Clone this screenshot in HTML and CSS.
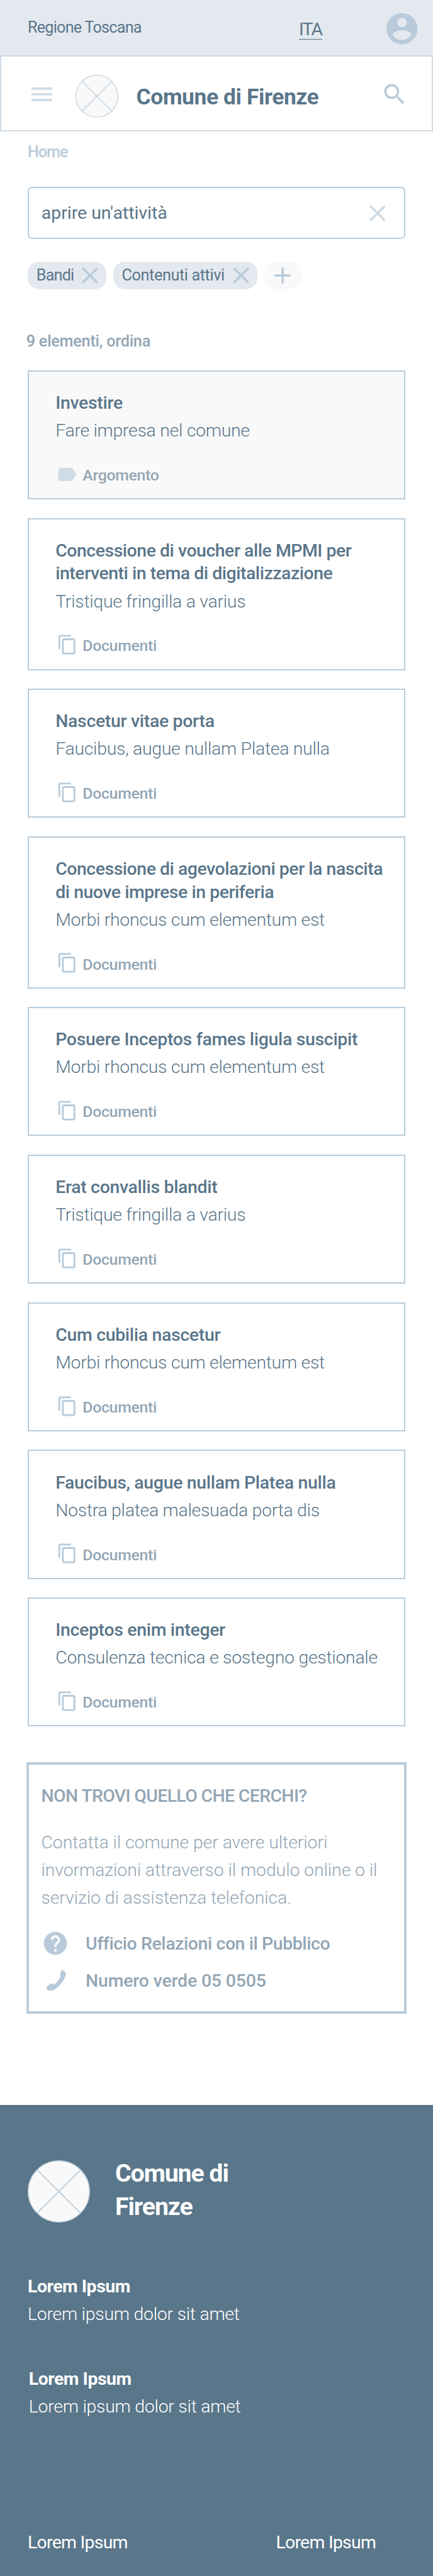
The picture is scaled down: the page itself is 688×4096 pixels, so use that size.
FILE: index.html
```html
<!DOCTYPE html>
<html lang="it">
<head>
<meta charset="utf-8">
<title>Comune di Firenze</title>
<link rel="stylesheet" href="styles.css">
</head>
<body>
<svg class="sprite" width="0" height="0">
  <symbol id="copy" viewBox="0 0 24 24"><path d="M16 1H4c-1.1 0-2 .9-2 2v14h2V3h12V1zm3 4H8c-1.1 0-2 .9-2 2v14c0 1.1.9 2 2 2h11c1.1 0 2-.9 2-2V7c0-1.1-.9-2-2-2zm0 16H8V7h11v14z"/></symbol>
  <symbol id="close" viewBox="0 0 24 24"><path d="M19 6.41L17.59 5 12 10.59 6.41 5 5 6.41 10.59 12 5 17.59 6.41 19 12 13.41 17.59 19 19 17.59 13.41 12z"/></symbol>
  <symbol id="crest" viewBox="0 0 74 74"><circle cx="37" cy="37" r="36.4" fill="#f9f9f9" stroke="#b9cbda" stroke-width="1.2"/><path d="M11.3 11.3l51.4 51.4M62.7 11.3L11.3 62.7" stroke="#b9cbda" stroke-width="1.3"/></symbol>
</svg>

<div class="topbar">
  <span class="region">Regione Toscana</span>
  <a class="lang">ITA</a>
  <svg class="avatar" viewBox="0 0 24 24"><path d="M12 2C6.48 2 2 6.48 2 12s4.48 10 10 10 10-4.48 10-10S17.52 2 12 2zm0 3c1.66 0 3 1.34 3 3s-1.34 3-3 3-3-1.34-3-3 1.34-3 3-3zm0 14.2c-2.5 0-4.71-1.28-6-3.22.03-1.99 4-3.08 6-3.08 1.99 0 5.97 1.09 6 3.08-1.29 1.94-3.5 3.22-6 3.22z"/></svg>
</div>

<header class="header">
  <svg class="menu" viewBox="0 0 36 24"><path d="M0 0h36v4H0zM0 10h36v4H0zM0 20h36v4H0z"/></svg>
  <svg class="crest"><use href="#crest"/></svg>
  <h1 class="site-name">Comune di Firenze</h1>
  <svg class="search-icon" viewBox="0 0 24 24"><path d="M15.5 14h-.79l-.28-.27C15.41 12.59 16 11.11 16 9.5 16 5.91 13.09 3 9.5 3S3 5.91 3 9.5 5.91 16 9.5 16c1.61 0 3.09-.59 4.23-1.57l.27.28v.79l5 4.99L20.49 19l-4.99-5zm-6 0C7.01 14 5 11.99 5 9.5S7.01 5 9.5 5 14 7.01 14 9.5 11.99 14 9.5 14z"/></svg>
</header>

<main class="main">
  <nav class="breadcrumb">Home</nav>

  <div class="search">
    <span class="query">aprire un'attività</span>
    <svg class="icon pale"><use href="#close"/></svg>
  </div>

  <div class="chips">
    <span class="chip"><span class="chip-text tight">Bandi</span><svg class="icon"><use href="#close"/></svg></span>
    <span class="chip chip-wide"><span class="chip-text">Contenuti attivi</span><svg class="icon"><use href="#close"/></svg></span>
    <span class="chip chip-add"><svg class="icon" viewBox="0 0 24 24"><path d="M19 13h-6v6h-2v-6H5v-2h6V5h2v6h6v2z"/></svg></span>
  </div>

  <div class="sort">9 elementi, ordina</div>

  <div class="cards">
    <article class="card card-topic">
      <h2 class="title">Investire</h2>
      <p class="text">Fare impresa nel comune</p>
      <div class="tag"><svg class="label-icon" viewBox="0 0 24 24"><path d="M17.63 5.84C17.27 5.33 16.67 5 16 5L5 5.01C3.9 5.01 3 5.9 3 7v10c0 1.1.9 1.99 2 1.99L16 19c.67 0 1.27-.33 1.63-.84L22 12l-4.37-6.16z"/></svg><span>Argomento</span></div>
    </article>
    <article class="card">
      <h2 class="title long">Concessione di voucher alle MPMI per<br>interventi in tema di digitalizzazione</h2>
      <p class="text">Tristique fringilla a varius</p>
      <div class="tag"><svg class="copy-icon"><use href="#copy"/></svg><span>Documenti</span></div>
    </article>
    <article class="card">
      <h2 class="title">Nascetur vitae porta</h2>
      <p class="text">Faucibus, augue nullam Platea nulla</p>
      <div class="tag"><svg class="copy-icon"><use href="#copy"/></svg><span>Documenti</span></div>
    </article>
    <article class="card">
      <h2 class="title long">Concessione di agevolazioni per la nascita<br>di nuove imprese in periferia</h2>
      <p class="text">Morbi rhoncus cum elementum est</p>
      <div class="tag"><svg class="copy-icon"><use href="#copy"/></svg><span>Documenti</span></div>
    </article>
    <article class="card">
      <h2 class="title">Posuere Inceptos fames ligula suscipit</h2>
      <p class="text">Morbi rhoncus cum elementum est</p>
      <div class="tag"><svg class="copy-icon"><use href="#copy"/></svg><span>Documenti</span></div>
    </article>
    <article class="card">
      <h2 class="title">Erat convallis blandit</h2>
      <p class="text">Tristique fringilla a varius</p>
      <div class="tag"><svg class="copy-icon"><use href="#copy"/></svg><span>Documenti</span></div>
    </article>
    <article class="card">
      <h2 class="title">Cum cubilia nascetur</h2>
      <p class="text">Morbi rhoncus cum elementum est</p>
      <div class="tag"><svg class="copy-icon"><use href="#copy"/></svg><span>Documenti</span></div>
    </article>
    <article class="card">
      <h2 class="title">Faucibus, augue nullam Platea nulla</h2>
      <p class="text">Nostra platea malesuada porta dis</p>
      <div class="tag"><svg class="copy-icon"><use href="#copy"/></svg><span>Documenti</span></div>
    </article>
    <article class="card">
      <h2 class="title">Inceptos enim integer</h2>
      <p class="text">Consulenza tecnica e sostegno gestionale</p>
      <div class="tag"><svg class="copy-icon"><use href="#copy"/></svg><span>Documenti</span></div>
    </article>
  </div>

  <section class="contact">
    <h2 class="contact-title">NON TROVI QUELLO CHE CERCHI?</h2>
    <p class="contact-text">Contatta il comune per avere ulteriori<br>invormazioni attraverso il modulo online o il<br>servizio di assistenza telefonica.</p>
    <div class="contact-row"><svg class="icon" viewBox="0 0 24 24"><path d="M12 2C6.48 2 2 6.48 2 12s4.48 10 10 10 10-4.48 10-10S17.52 2 12 2zm1 17h-2v-2h2v2zm2.07-7.75l-.9.92C13.45 12.9 13 13.5 13 15h-2v-.5c0-1.1.45-2.1 1.17-2.83l1.24-1.26c.37-.36.59-.86.59-1.41 0-1.1-.9-2-2-2s-2 .9-2 2H8c0-2.21 1.79-4 4-4s4 1.79 4 4c0 .88-.36 1.68-.93 2.25z"/></svg><span>Ufficio Relazioni con il Pubblico</span></div>
    <div class="contact-row phone"><svg class="icon" viewBox="36 210 144 144"><path d="M140 230q5-4 10 1l9 8q3 3 3 9c-1 20-18 48-38 66-14 13-30 22-46 22q-6 0-9-4l-8-9q-3-5 2-9l22-16q5-3 9 0 3 3 8 5c13-10 26-26 33-42q-2-6-3-9 0-4 2-8z"/></svg><span>Numero verde 05 0505</span></div>
  </section>
</main>

<footer class="footer">
  <div class="brand">
    <svg class="brand-crest"><use href="#crest"/></svg>
    <div class="brand-name">Comune di<br>Firenze</div>
  </div>
  <div class="info">
    <div class="info-title">Lorem Ipsum</div>
    <div class="info-text">Lorem ipsum dolor sit amet</div>
  </div>
  <div class="info info-second">
    <div class="info-title">Lorem Ipsum</div>
    <div class="info-text">Lorem ipsum dolor sit amet</div>
  </div>
  <div class="links">
    <a>Lorem Ipsum</a>
    <a>Lorem Ipsum</a>
  </div>
</footer>
</body>
</html>
```
FILE: styles.css
```css
/* 1rem = 10 design pixels */
html { font-size: 9.172px; background: #5a768a; }
* { box-sizing: border-box; }
body {
  margin: 0;
  background: #fff;
  color: #5a768a;
  font-family: Roboto, "Liberation Sans", sans-serif;
  font-size: 3.1rem;
  line-height: 4rem;
}
h1, h2, p { margin: 0; font: inherit; }
svg { display: block; flex: none; fill: #b9cbda; }
.sprite { position: absolute; }
.icon { width: 4.8rem; height: 4.8rem; }
.pale { fill: #cfdbe5; }

.topbar {
  display: flex;
  align-items: center;
  height: 9.6rem;
  padding-left: 4.8rem;
  background: #e4e9f0;
}
.region { width: 47rem; font-size: 2.75rem; letter-spacing: -.031em; }
.lang {
  width: 4rem;
  margin-top: .7rem;
  line-height: 3.4rem;
  letter-spacing: -.065em;
  white-space: nowrap;
  border-bottom: 1px solid #5a768a;
}
.avatar { width: 6.48rem; height: 6.48rem; margin: .4rem 0 0 10.56rem; }

.header {
  display: flex;
  align-items: center;
  height: 13.2rem;
  padding-left: 5.2rem;
  border: 2px solid #cfdbe5;
}
.menu { width: 3.6rem; height: 2.4rem; margin-top: .4rem; fill: #cfdbe5; }
.crest { width: 7.4rem; height: 7.4rem; margin: .9rem 3.1rem 0 4.1rem; }
.site-name {
  width: 42.4rem;
  margin-top: 1.2rem;
  font-size: 3.85rem;
  font-weight: 700;
  letter-spacing: -.0102em;
}
.search-icon { width: 4.8rem; height: 4.8rem; margin-top: .35rem; }

.main { padding: 1.66rem 4.8rem 15.8rem; }
.breadcrumb { color: #b9cbda; font-size: 2.75rem; font-weight: 500; letter-spacing: -.043em; }

.search {
  display: flex;
  align-items: center;
  justify-content: space-between;
  height: 9rem;
  margin-top: 3.94rem;
  padding: .2rem 2.2rem 0 2.15rem;
  border: 2px solid #b9cbda;
  border-radius: .8rem;
}

.chips { display: flex; gap: 1.2rem; margin-top: 4rem; }
.chip {
  display: flex;
  align-items: center;
  justify-content: space-between;
  width: 13.6rem;
  height: 4.8rem;
  padding: 0 .4rem 0 1.5rem;
  border-radius: 2rem;
  background: #e4e9f0;
  font-size: 2.75rem;
}
.chip-wide { width: 25rem; padding-right: .4rem; }
.chip-add { width: 6.4rem; padding: 0 .8rem; background: #f9f9f9; }
.chip-text { letter-spacing: -.0154em; white-space: nowrap; }
.chip-text.tight { letter-spacing: -.032em; }

.sort {
  margin: 7.06rem 0 0 -.25rem;
  color: #93a6b5;
  font-size: 2.75rem;
  font-weight: 500;
  letter-spacing: -.0094em;
}

.cards { display: flex; flex-direction: column; gap: 3.2rem; margin-top: 2.94rem; }
.card {
  padding: 3.52rem 0 1.9rem 4.6rem;
  border: 2px solid #b9cbda;
  white-space: nowrap;
}
.card-topic { background: #f9f9f9; }
.title { font-weight: 500; letter-spacing: -.0108em; }
.title.long { letter-spacing: -.0161em; }
.text { margin-top: .8rem; font-weight: 350; letter-spacing: -.0098em; }
.tag {
  display: flex;
  align-items: flex-start;
  height: 4rem;
  margin-top: 3.74rem;
  color: #93a6b5;
  font-size: 2.7rem;
  font-weight: 500;
  letter-spacing: -.0105em;
}
.copy-icon { width: 3.7rem; height: 3.7rem; margin: -.13rem .8rem 0 .2rem; }
.label-icon { width: 4rem; height: 4rem; margin: -.28rem .7rem 0 0; fill: #cfdbe5; }

.contact {
  margin: 6.2rem -.2rem 0;
  padding: 3.5rem 0 2.96rem 2.1rem;
  border: 4px solid #b9cbda;
  color: #93a6b5;
  white-space: nowrap;
}
.contact-title { font-weight: 500; letter-spacing: -.0224em; }
.contact-text { margin-top: 3.6rem; line-height: 4.8rem; font-weight: 350; letter-spacing: -.003em; }
.contact-row {
  display: flex;
  gap: 2.8rem;
  height: 4.8rem;
  margin: 3.06rem 0 0 .1rem;
  font-weight: 500;
  line-height: 5.08rem;
  letter-spacing: -.0141em;
}
.contact-row.phone { margin-top: 1.6rem; letter-spacing: -.006em; }

.footer { padding: 9.04rem 4.8rem 3.1rem; background: #5a768a; color: #fff; line-height: 4.8rem; }
.brand { display: flex; gap: 4.3rem; }
.brand-crest { width: 10.8rem; height: 10.8rem; margin: .56rem 0 0 .05rem; }
.brand-name { font-size: 4.28rem; font-weight: 700; line-height: 5.8rem; letter-spacing: -.0268em; }
.info { margin-top: 8.5rem; }
.info-second { margin: 6.4rem 0 0 .2rem; }
.info-title { font-weight: 700; letter-spacing: -.0166em; }
.info-text { font-weight: 350; letter-spacing: -.0086em; }
.links { display: grid; grid-template-columns: 43rem 1fr; margin-top: 18.8rem; letter-spacing: -.026em; }
```
